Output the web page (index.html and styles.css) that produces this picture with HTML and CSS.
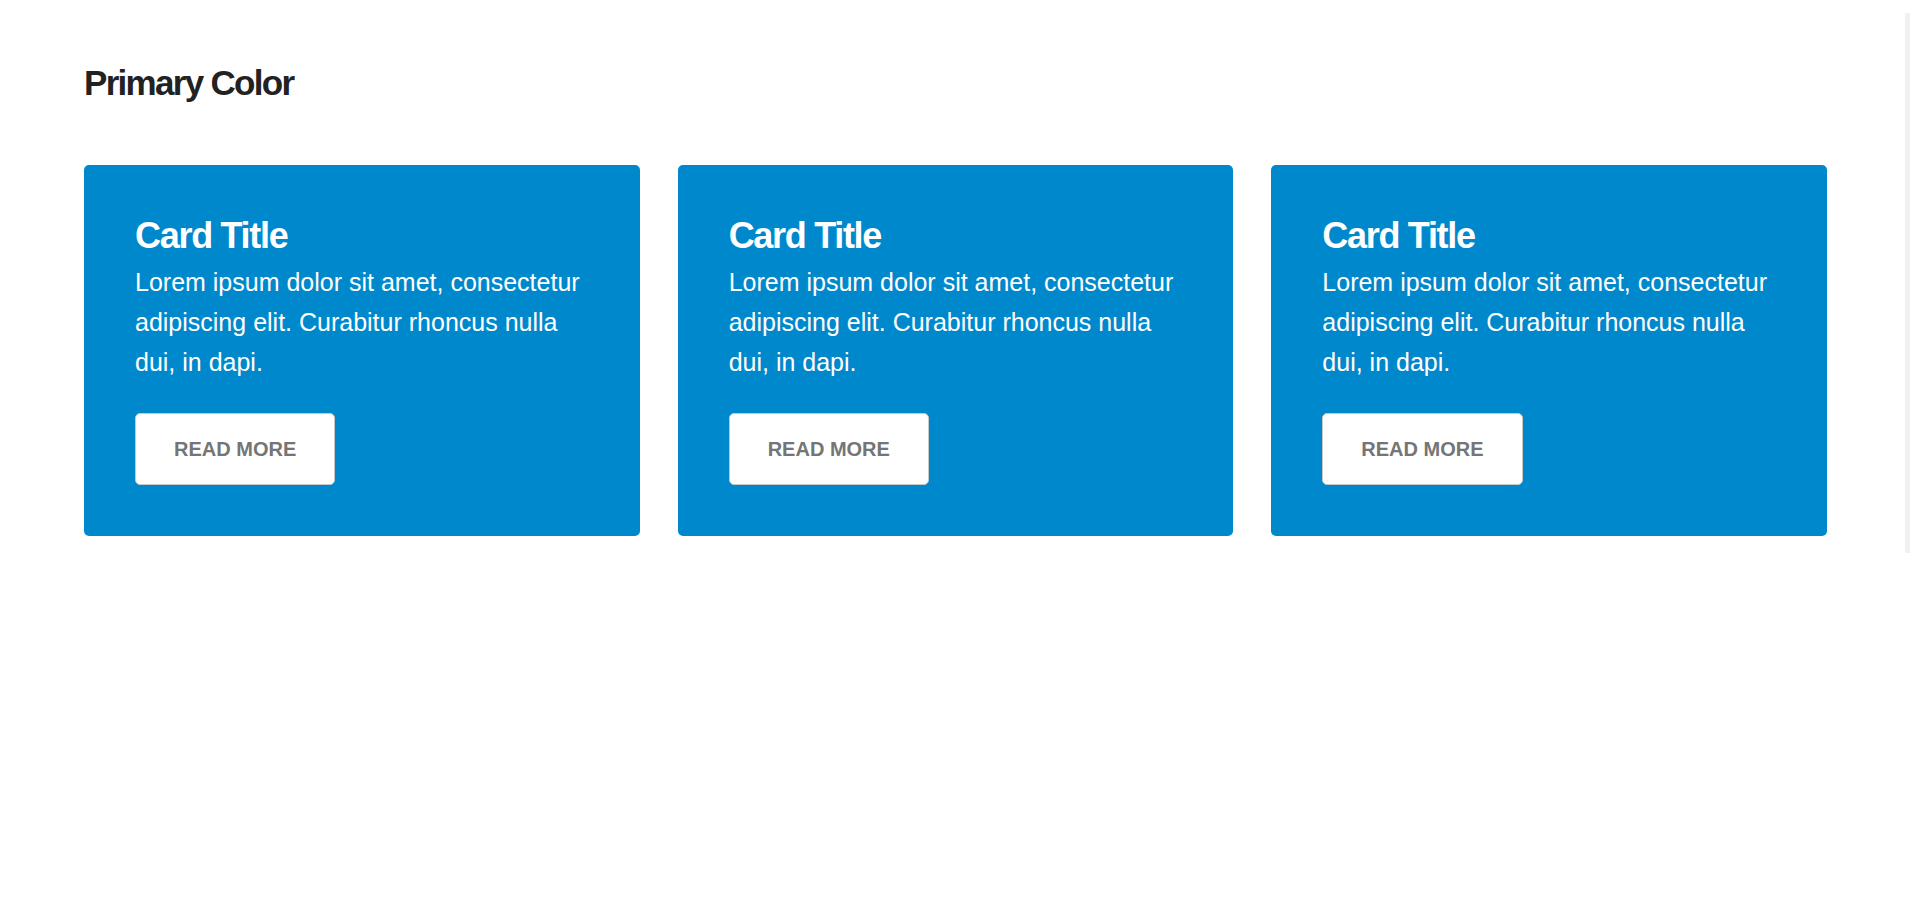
FILE: index.html
```html
<!DOCTYPE html>
<html lang="en">
<head>
    <meta charset="UTF-8">
    <title>Primary Color</title>
    <link rel="stylesheet" href="styles.css">
</head>
<body>
    <div class="page">
        <h2 class="sectionTitle">Primary Color</h2>
        <div class="cardRow">
            <div class="card">
                <h3 class="cardTitle">Card Title</h3>
                <p class="cardText">Lorem ipsum dolor sit amet, consectetur adipiscing elit. Curabitur rhoncus nulla dui, in dapi.</p>
                <a class="cardButton" href="#">Read More</a>
            </div>
            <div class="card">
                <h3 class="cardTitle">Card Title</h3>
                <p class="cardText">Lorem ipsum dolor sit amet, consectetur adipiscing elit. Curabitur rhoncus nulla dui, in dapi.</p>
                <a class="cardButton" href="#">Read More</a>
            </div>
            <div class="card">
                <h3 class="cardTitle">Card Title</h3>
                <p class="cardText">Lorem ipsum dolor sit amet, consectetur adipiscing elit. Curabitur rhoncus nulla dui, in dapi.</p>
                <a class="cardButton" href="#">Read More</a>
            </div>
        </div>
    </div>
    <div class="scrollThumb"></div>
</body>
</html>
```

FILE: styles.css
```css
*{
    margin: 0;
    padding: 0;
    box-sizing: border-box;
}
body{
    font-family: "Liberation Sans", Arial, sans-serif;
    background-color: #fff;
    overflow: hidden;
}
.page{
    padding: 62px 93px 0 84px;
}
.sectionTitle{
    font-size: 35px;
    line-height: 42px;
    font-weight: bold;
    letter-spacing: -1.7px;
    color: #222;
    margin-bottom: 61px;
}
.cardRow{
    display: grid;
    grid-template-columns: 1fr 1fr 1fr;
    gap: 38px;
}
.card{
    background-color: #0088cc;
    border-radius: 5px;
    padding: 51px;
    color: #fff;
}
.cardTitle{
    font-size: 36px;
    line-height: 39.6px;
    font-weight: bold;
    letter-spacing: -1.3px;
    margin-bottom: 6px;
}
.cardText{
    font-size: 25px;
    line-height: 40px;
    margin-bottom: 31px;
}
.cardButton{
    display: inline-block;
    height: 72px;
    padding: 23px 38px;
    background-color: #fff;
    border: 1px solid #c9c9c9;
    border-radius: 5px;
    color: #757575;
    font-size: 20px;
    line-height: 24px;
    font-weight: bold;
    text-transform: uppercase;
    text-decoration: none;
}
.scrollThumb{
    position: fixed;
    top: 13px;
    left: 1905px;
    width: 5px;
    height: 540px;
    background-color: #f1f1f1;
}
```
